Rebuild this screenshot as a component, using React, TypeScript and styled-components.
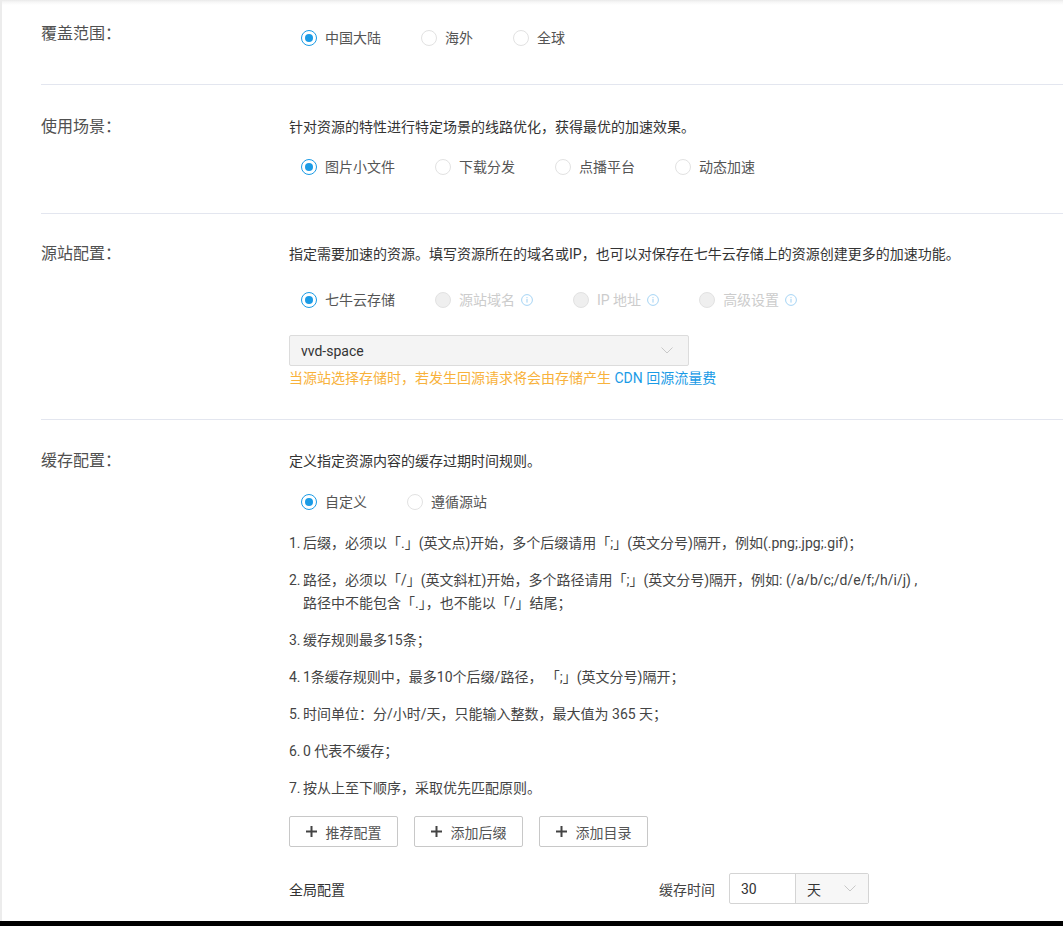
import React from "react";
import styled, { createGlobalStyle } from "styled-components";

const GlobalStyle = createGlobalStyle`
  html, body {
    margin: 0;
    padding: 0;
    background: #fff;
  }
  body {
    font-family: Roboto, "Noto Sans CJK SC", "Noto Sans", sans-serif;
    font-size: 14px;
    color: #333;
  }
`;

type RadioOption = {
  label: string;
  checked?: boolean;
  disabled?: boolean;
  info?: boolean;
};

const InfoIcon = () => (
  <svg width="12" height="12" viewBox="0 0 12 12">
    <circle cx="6" cy="6" r="5.4" fill="none" stroke="#a6d4f4" strokeWidth="1" />
    <rect x="5.45" y="5" width="1.1" height="3.6" fill="#a6d4f4" />
    <rect x="5.45" y="3.1" width="1.1" height="1.1" fill="#a6d4f4" />
  </svg>
);

const Chevron = () => (
  <svg width="12" height="7" viewBox="0 0 12 7">
    <path d="M0.5 0.5 L6 6 L11.5 0.5" fill="none" stroke="#c8c8c8" strokeWidth="1" />
  </svg>
);

const PlusIcon = () => (
  <svg width="11" height="11" viewBox="0 0 11 11">
    <rect x="4.5" y="0" width="2" height="11" fill="#444" />
    <rect x="0" y="4.5" width="11" height="2" fill="#444" />
  </svg>
);

const RadioGroup = ({ options, $top = 0 }: { options: RadioOption[]; $top?: number }) => (
  <RadioRow $top={$top}>
    {options.map((o) => (
      <RadioItem key={o.label} $disabled={o.disabled}>
        <RadioCircle $checked={o.checked} $disabled={o.disabled} />
        <span>{o.label}</span>
        {o.info && (
          <InfoWrap>
            <InfoIcon />
          </InfoWrap>
        )}
      </RadioItem>
    ))}
  </RadioRow>
);

const rules = [
  ["1.", "后缀，必须以「.」(英文点)开始，多个后缀请用「;」(英文分号)隔开，例如(.png;.jpg;.gif)；"],
  ["2.", "路径，必须以「/」(英文斜杠)开始，多个路径请用「;」(英文分号)隔开，例如: (/a/b/c;/d/e/f;/h/i/j) ,", "路径中不能包含「.」，也不能以「/」结尾；"],
  ["3.", "缓存规则最多15条；"],
  ["4.", "1条缓存规则中，最多10个后缀/路径， 「;」(英文分号)隔开；"],
  ["5.", "时间单位：分/小时/天，只能输入整数，最大值为 365 天；"],
  ["6.", "0 代表不缓存；"],
  ["7.", "按从上至下顺序，采取优先匹配原则。"],
];

const App = () => {
  return (
    <>
      <GlobalStyle />
      <Screen>
        <Page>
          <Section $pad="24px 0 36px">
            <Label>覆盖范围：</Label>
            <Content>
              <RadioGroup
                $top={4}
                options={[{ label: "中国大陆", checked: true }, { label: "海外" }, { label: "全球" }]}
              />
            </Content>
          </Section>

          <Section $pad="32px 0 36px">
            <Label>使用场景：</Label>
            <Content>
              <Desc>针对资源的特性进行特定场景的线路优化，获得最优的加速效果。</Desc>
              <RadioGroup
                $top={20}
                options={[
                  { label: "图片小文件", checked: true },
                  { label: "下载分发" },
                  { label: "点播平台" },
                  { label: "动态加速" },
                ]}
              />
            </Content>
          </Section>

          <Section $pad="30px 0 31px">
            <Label>源站配置：</Label>
            <Content>
              <Desc>指定需要加速的资源。填写资源所在的域名或IP，也可以对保存在七牛云存储上的资源创建更多的加速功能。</Desc>
              <RadioGroup
                $top={26}
                options={[
                  { label: "七牛云存储", checked: true },
                  { label: "源站域名", disabled: true, info: true },
                  { label: "IP 地址", disabled: true, info: true },
                  { label: "高级设置", disabled: true, info: true },
                ]}
              />
              <Select>
                <span>vvd-space</span>
                <Chevron />
              </Select>
              <Warning>
                当源站选择存储时，若发生回源请求将会由存储产生 <LinkText>CDN 回源流量费</LinkText>
              </Warning>
            </Content>
          </Section>

          <Section $pad="31px 0 0" $last>
            <Label>缓存配置：</Label>
            <Content>
              <Desc>定义指定资源内容的缓存过期时间规则。</Desc>
              <RadioGroup $top={21} options={[{ label: "自定义", checked: true }, { label: "遵循源站" }]} />
              <RuleList>
                {rules.map(([num, ...lines]) => (
                  <RuleItem key={num}>
                    <RuleNum>{num}</RuleNum>
                    <RuleText>
                      {lines.map((l, i) => (
                        <div key={i}>{l}</div>
                      ))}
                    </RuleText>
                  </RuleItem>
                ))}
              </RuleList>
              <ButtonRow>
                {["推荐配置", "添加后缀", "添加目录"].map((t) => (
                  <AddButton key={t}>
                    <PlusIcon />
                    <span>{t}</span>
                  </AddButton>
                ))}
              </ButtonRow>
              <GlobalRow>
                <GlobalLabel>全局配置</GlobalLabel>
                <TimeLabel>缓存时间</TimeLabel>
                <TimeInput>
                  <TimeValue>30</TimeValue>
                  <TimeUnit>
                    <span>天</span>
                    <Chevron />
                  </TimeUnit>
                </TimeInput>
              </GlobalRow>
            </Content>
          </Section>
        </Page>
        <BottomBar />
      </Screen>
    </>
  );
};

const Screen = styled.div`
  width: 1063px;
  height: 926px;
  display: flex;
  flex-direction: column;
  overflow: hidden;
`;

const Page = styled.div`
  height: 921px;
  overflow: hidden;
  border-left: 2px solid #ececec;
  background: linear-gradient(#e9e9e9 0px, #f6f6f6 2px, #ffffff 5px);
  padding-left: 39px;
  box-sizing: border-box;
`;

const BottomBar = styled.div`
  height: 5px;
  background: #000;
`;

const Section = styled.div<{ $pad: string; $last?: boolean }>`
  display: flex;
  padding: ${({ $pad }) => $pad};
  border-bottom: ${({ $last }) => ($last ? "none" : "1px solid #e3e6ef")};
`;

const Label = styled.div`
  width: 248px;
  flex-shrink: 0;
  font-size: 16px;
  line-height: 20px;
  color: #505050;
`;

const Content = styled.div`
  display: flex;
  flex-direction: column;
  flex: 1;
`;

const Desc = styled.div`
  line-height: 20px;
  color: #333;
`;

const RadioRow = styled.div<{ $top: number }>`
  display: flex;
  align-items: center;
  margin-top: ${({ $top }) => $top}px;
  padding-left: 12px;
  height: 20px;
`;

const RadioItem = styled.label<{ $disabled?: boolean }>`
  display: flex;
  align-items: center;
  margin-right: 40px;
  line-height: 20px;
  color: ${({ $disabled }) => ($disabled ? "#cccccc" : "#555")};
`;

const RadioCircle = styled.span<{ $checked?: boolean; $disabled?: boolean }>`
  position: relative;
  width: 16px;
  height: 16px;
  box-sizing: border-box;
  border-radius: 50%;
  margin-right: 8px;
  border: ${({ $checked }) => ($checked ? "1.5px solid #1a9be6" : "1px solid #e2e2e2")};
  background: ${({ $disabled }) => ($disabled ? "#efefef" : "#fff")};

  &::after {
    content: "";
    display: ${({ $checked }) => ($checked ? "block" : "none")};
    position: absolute;
    left: 50%;
    top: 50%;
    width: 8px;
    height: 8px;
    margin: -4px 0 0 -4px;
    border-radius: 50%;
    background: #1a9be6;
  }
`;

const InfoWrap = styled.span`
  display: inline-flex;
  margin-left: 6px;
`;

const Select = styled.div`
  margin-top: 25px;
  width: 400px;
  height: 31px;
  box-sizing: border-box;
  border: 1px solid #dcdcdc;
  border-radius: 2px;
  background: #f4f4f4;
  display: flex;
  align-items: center;
  justify-content: space-between;
  padding: 0 15px 0 11px;
  color: #333;
`;

const Warning = styled.div`
  margin-top: 2px;
  line-height: 20px;
  color: #f8b23c;
`;

const LinkText = styled.span`
  color: #1a9be6;
`;

const RuleList = styled.div`
  margin-top: 20px;
  display: flex;
  flex-direction: column;
  gap: 14px;
  color: #444;
`;

const RuleItem = styled.div`
  display: flex;
  line-height: 23px;
`;

const RuleNum = styled.span`
  width: 14px;
  flex-shrink: 0;
`;

const RuleText = styled.div`
  white-space: pre;
`;

const ButtonRow = styled.div`
  display: flex;
  gap: 16px;
  margin-top: 16px;
`;

const AddButton = styled.button`
  width: 109px;
  height: 31px;
  box-sizing: border-box;
  border: 1px solid #c8c8c8;
  border-radius: 2px;
  background: #fff;
  display: flex;
  align-items: center;
  justify-content: center;
  gap: 9px;
  font-family: inherit;
  font-size: 14px;
  color: #555;
  padding: 0;
`;

const GlobalRow = styled.div`
  display: flex;
  align-items: center;
  margin-top: 26px;
`;

const GlobalLabel = styled.div`
  width: 370px;
  color: #333;
`;

const TimeLabel = styled.div`
  color: #444;
  margin-right: 14px;
`;

const TimeInput = styled.div`
  display: flex;
  width: 140px;
  height: 31px;
  box-sizing: border-box;
  border: 1px solid #d4d4d4;
  border-radius: 2px;
`;

const TimeValue = styled.div`
  width: 66px;
  border-right: 1px solid #d4d4d4;
  display: flex;
  align-items: center;
  padding-left: 11px;
  box-sizing: border-box;
  color: #333;
`;

const TimeUnit = styled.div`
  flex: 1;
  background: #f7f7f7;
  display: flex;
  align-items: center;
  justify-content: space-between;
  padding: 0 12px 0 11px;
  color: #333;
`;

export default App;
